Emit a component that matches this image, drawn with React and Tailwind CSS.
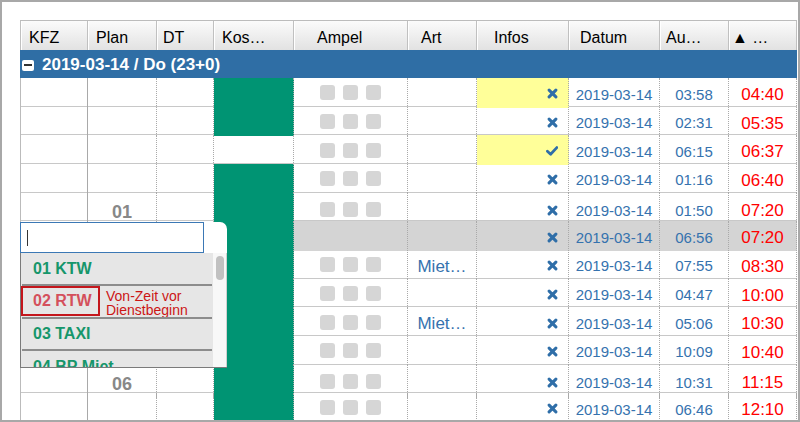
import React from "react";

const COLS = "grid grid-cols-[68px_69px_57px_80px_114px_69px_92px_91px_69px_68px]";

const headers = [
  { label: "KFZ", pad: "pl-[8px]" },
  { label: "Plan", pad: "pl-[8px]" },
  { label: "DT", pad: "pl-[6px]" },
  { label: "Kos…", pad: "pl-[8px]" },
  { label: "Ampel", pad: "pl-[23px]" },
  { label: "Art", pad: "pl-[13px]" },
  { label: "Infos", pad: "pl-[17px]" },
  { label: "Datum", pad: "pl-[11px]" },
  { label: "Au…", pad: "pl-[6px]" },
  { label: "▲ …", pad: "pl-[3px]" },
];

const rows = [
  { yellow: true, icon: "x", au: "03:58", end: "04:40" },
  { icon: "x", au: "02:31", end: "05:35" },
  { yellow: true, icon: "check", au: "06:15", end: "06:37", noKos: true },
  { icon: "x", au: "01:16", end: "06:40" },
  { icon: "x", au: "01:50", end: "07:20", plan: "01" },
  { icon: "x", au: "06:56", end: "07:20", selected: true },
  { icon: "x", au: "07:55", end: "08:30", art: "Miet…" },
  { icon: "x", au: "04:47", end: "10:00" },
  { icon: "x", au: "05:06", end: "10:30", art: "Miet…" },
  { icon: "x", au: "10:09", end: "10:40" },
  { icon: "x", au: "10:31", end: "11:15", plan: "06" },
  { icon: "x", au: "06:46", end: "12:10" },
];

const XIcon = () => (
  <svg width="11" height="11" viewBox="0 0 12 12">
    <path d="M2.3 2.3 L9.7 9.7 M9.7 2.3 L2.3 9.7" stroke="#2f6ea8" strokeWidth="3.3" strokeLinecap="round" fill="none" />
  </svg>
);

const CheckIcon = () => (
  <svg width="12" height="10" viewBox="0 0 12 10">
    <path d="M1.4 5.2 L4.6 8.2 L10.8 1.6" stroke="#2f6ea8" strokeWidth="2.8" strokeLinecap="round" strokeLinejoin="round" fill="none" />
  </svg>
);

const cell = "h-full border-r border-dotted border-[#a9a9a9] flex items-center";

const Row = ({ r }) => {
  const sel = r.selected ? "bg-[#d4d4d4]" : "";
  return (
    <div className={`${COLS} h-[28.67px] border-b border-[#c8c8c8]`}>
      <div className={`${cell} border-l border-l-[#bbb] border-solid`} />
      <div className={`${cell} justify-center pt-[6px] text-[18px] font-bold text-[#888]`}>{r.plan}</div>
      <div className={cell} />
      <div className={`${cell} ${r.noKos ? "" : "bg-[#009473]"}`} />
      <div className={`${cell} justify-center gap-[8px] ${sel}`}>
        {!r.selected && [0, 1, 2].map((i) => (
          <span key={i} className="w-[15px] h-[15px] rounded-[3px] bg-[#d6d6d6]" />
        ))}
      </div>
      <div className={`${cell} justify-center pt-[4px] text-[17px] text-[#3572ae] ${sel}`}>{r.art}</div>
      <div className={`${cell} justify-end pr-[10px] pt-[2px] ${r.yellow ? "bg-[#ffff99]" : sel}`}>
        {r.icon === "x" ? <XIcon /> : <CheckIcon />}
      </div>
      <div className={`${cell} justify-center pt-[4px] text-[15px] text-[#3572ae] ${sel}`}>2019-03-14</div>
      <div className={`${cell} justify-center pt-[4px] text-[15px] text-[#3572ae] ${sel}`}>{r.au}</div>
      <div className={`${cell} justify-center pt-[4px] text-[17px] text-[#ff0000] ${sel}`}>{r.end}</div>
    </div>
  );
};

const Dropdown = () => (
  <div className="absolute left-0 top-[202px] w-[207px] z-10">
    <div className="flex h-[31px] bg-white rounded-tr-[7px]">
      <div className="w-[184px] h-full border border-[#3b78b5] bg-white flex items-center pl-[6px]">
        <span className="w-px h-[16px] bg-[#333]" />
      </div>
    </div>
    <div className="flex h-[115px] border-l border-b border-[#7a7a7a] bg-[#f8f8f8] overflow-hidden">
      <div className="w-[192px] flex flex-col bg-[#e6e6e6] text-[16px] font-bold">
        <div className="h-[31px] shrink-0 flex items-center pl-[12px] text-[#16966b]">01 KTW</div>
        <div className="h-[2px] shrink-0 mx-[1px] bg-[#8c8c8c]" />
        <div className="h-[31px] shrink-0 flex">
          <div className="w-[79px] shrink-0 h-[30px] border-2 border-[#c4161c] flex items-center pl-[10px] whitespace-nowrap text-[#d4505c]">
            02 RTW
          </div>
          <div className="ml-[6px] pt-[3px] text-[14px] leading-[14px] font-normal text-[#cc1515]">
            Von-Zeit vor Dienstbeginn
          </div>
        </div>
        <div className="h-[2px] shrink-0 mx-[1px] bg-[#8c8c8c]" />
        <div className="h-[30px] shrink-0 flex items-center pl-[12px] text-[#16966b]">03 TAXI</div>
        <div className="h-[2px] shrink-0 mx-[1px] bg-[#8c8c8c]" />
        <div className="h-[31px] shrink-0 flex items-center pl-[12px] text-[#16966b]">04 BP Miet</div>
      </div>
      <div className="flex-1 border-r border-[#d0d0d0] relative">
        <div className="absolute left-[3px] top-[3px] w-[8px] h-[24px] rounded-full bg-[#c1c1c1]" />
      </div>
    </div>
  </div>
);

export default function App() {
  return (
    <div className="w-[800px] h-[422px] overflow-hidden border-2 border-[#a8a8a8] bg-white pt-[18px] pl-[18px] font-['Liberation_Sans',Arial,sans-serif]">
      <div className="relative w-[777px]">
        <div className={`${COLS} h-[30px] border-t border-[#bcbcbc]`}>
          {headers.map((h, i) => (
            <div
              key={h.label}
              className={`flex items-center ${h.pad} pt-[4px] text-[16px] text-black bg-linear-to-b from-[#fbfbfb] to-[#e2e2e2] border-r border-[#c0c0c0] shadow-[inset_1px_0_0_#ffffff] ${i === 0 ? "border-l" : ""}`}
            >
              {h.label}
            </div>
          ))}
        </div>
        <div className="h-[28px] bg-[#2f6ea5] flex items-center pl-[2px] pt-[2px]">
          <span className="w-[12px] h-[11px] rounded-[2px] bg-white flex items-center justify-center">
            <span className="w-[8px] h-[2px] bg-[#333]" />
          </span>
          <span className="ml-[8px] text-[17px] font-bold text-white">2019-03-14 / Do (23+0)</span>
        </div>
        {rows.map((r, i) => (
          <Row key={i} r={r} />
        ))}
        <Dropdown />
      </div>
    </div>
  );
}
